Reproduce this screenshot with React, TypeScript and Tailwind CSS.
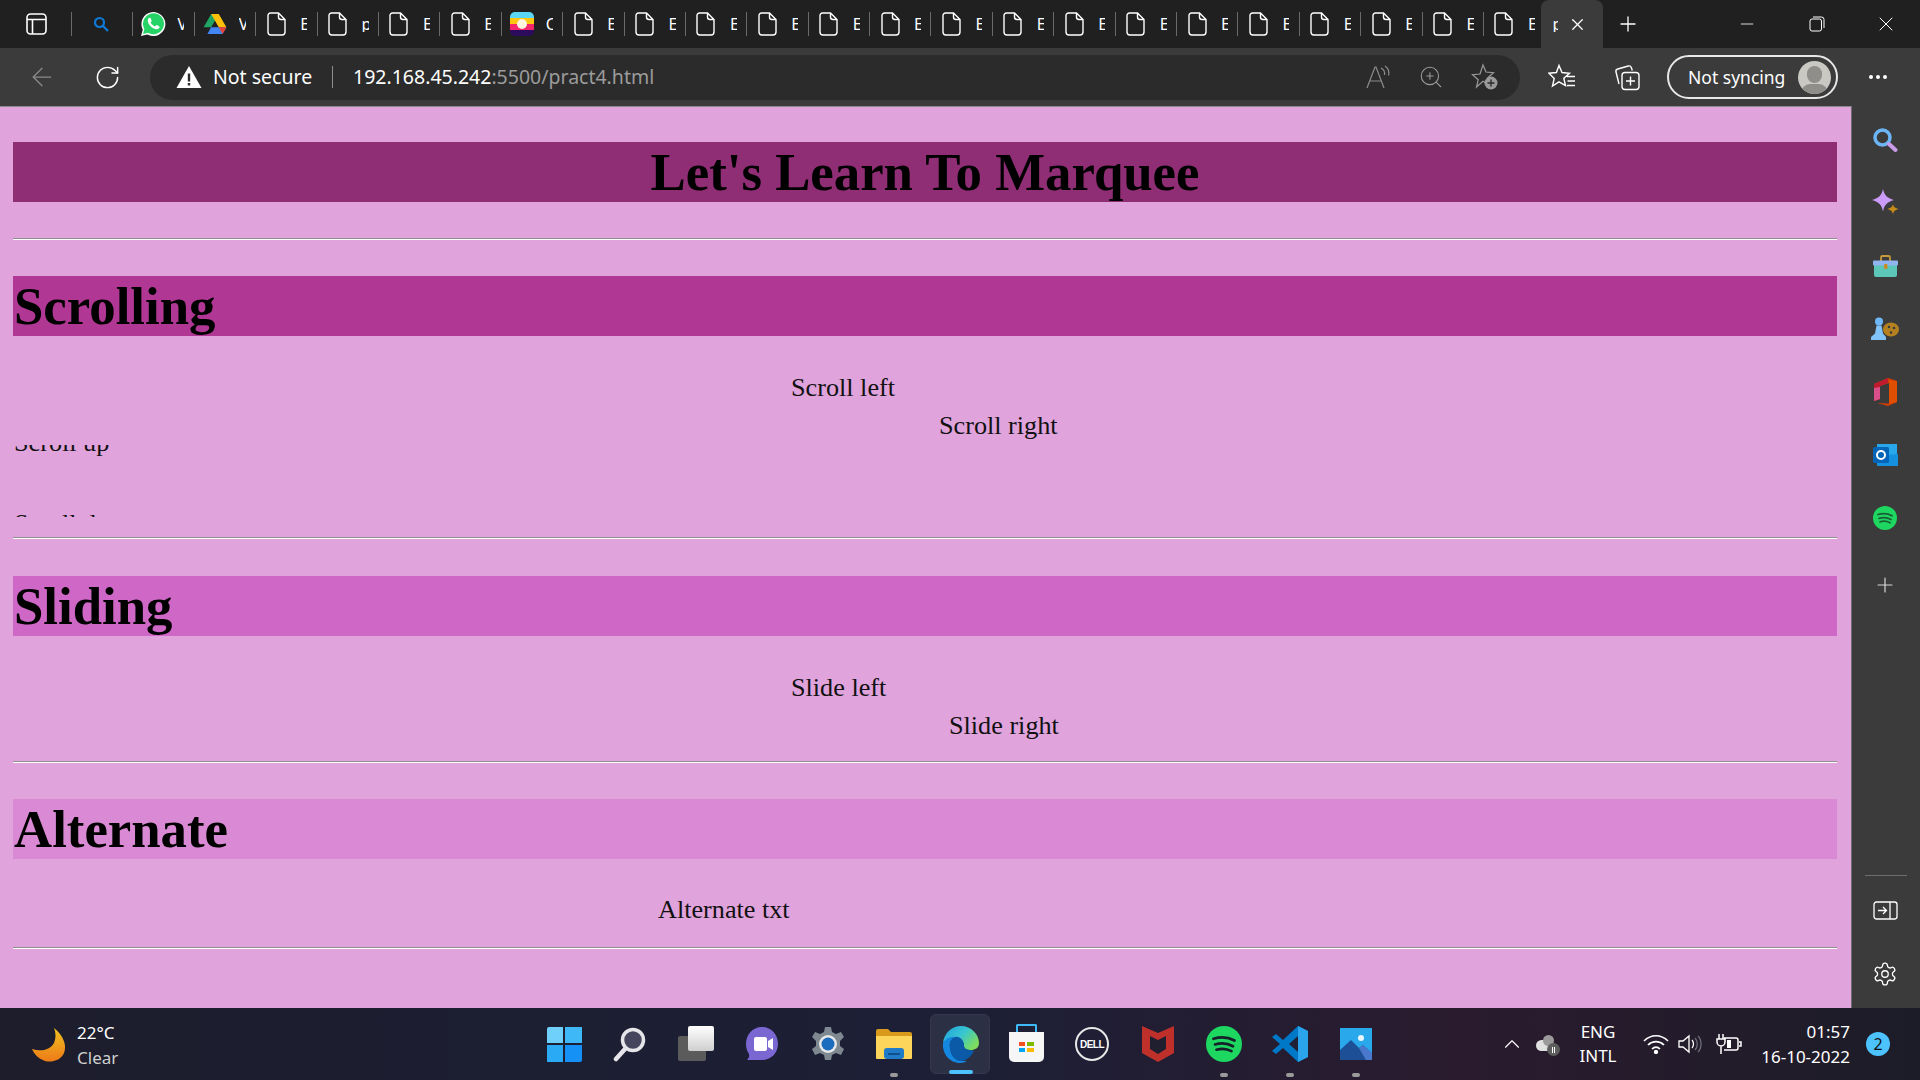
import React from "react";
import { ArrowLeft, RotateCw, X, Plus, Minus, ZoomIn, ChevronUp } from "lucide-react";

const ui = "font-['Noto_Sans','Open_Sans',sans-serif]";
const serif = "font-['Liberation_Serif','Times_New_Roman',serif]";

const FileIcon = () => (
  <svg width="19" height="24" viewBox="0 0 19 24" fill="none" stroke="#fff" strokeWidth="1.4" className="shrink-0">
    <path d="M3.5 1h8L18 7.5V20a3 3 0 0 1-3 3H4a3 3 0 0 1-3-3V3.5A2.5 2.5 0 0 1 3.5 1zM11.5 1v4a2.5 2.5 0 0 0 2.5 2.5h4" />
  </svg>
);
const Whatsapp = () => (
  <svg width="26" height="26" viewBox="0 0 26 26" className="shrink-0">
    <path d="M1 25l1.8-6.3A12 12 0 1 1 7.500 23.500z" fill="#fff" />
    <path d="M3 23l1.400-5A10.500 10.500 0 1 1 8 21.700z" fill="#25d366" />
    <path d="M9.500 6.800c-.6 0-1.700 1-1.700 2.800 0 4 4.500 8.600 8.800 8.600 1.800 0 3-1.300 3-2.300 0-.5-2.700-1.900-3.100-1.800-.5.100-1 1.400-1.500 1.300-1.600-.4-3.800-2.400-4.300-3.900-.1-.5 1-1.100 1-1.600 0-.4-1-3-1.500-3.100z" fill="#fff" />
  </svg>
);
const Drive = () => (
  <svg width="24" height="22" viewBox="0 0 24 22" className="shrink-0">
    <path d="M8.200 1h7.600l-7.700 13.300H.6z" fill="#1fa463" />
    <path d="M15.800 1l7.600 13.300h-7.700L8.200 1z" fill="#ffc107" />
    <path d="M23.400 14.300L19.600 21H4.400l3.700-6.700z" fill="#4285f4" />
    <path d="M23.400 14.300L19.600 21l-3.900-6.700z" fill="#ea4335" />
  </svg>
);
const Colourful = () => (
  <div className="relative w-6 h-6 shrink-0 rounded-[5px] overflow-hidden flex flex-col">
    <div className="h-[6px] bg-[#5ad7f5]" />
    <div className="h-[6px] bg-[#fec60f]" />
    <div className="h-[6px] bg-[#f5256b]" />
    <div className="h-[6px] bg-[#2c0a5c]" />
    <div className="absolute left-[7px] top-[7px] w-[10px] h-[10px] rounded-full bg-[#fff4dc]" />
  </div>
);

const Tab = ({ icon, letter, first }: { icon: React.ReactNode; letter?: string; first?: boolean }) => (
  <div className="w-[61.4px] h-[24px] shrink-0 border-l border-[#6a6a6a] flex items-center overflow-hidden">
    <div className={`w-[43px] shrink-0 flex justify-center ${first ? "pl-[14px]" : "pr-[7px] pl-[4px]"}`}>{icon}</div>
    {letter && (
      <span className={`${ui} text-[16px] text-white ml-[1px] w-[7px] overflow-hidden leading-none`}>{letter}</span>
    )}
  </div>
);

const tabs: { icon: React.ReactNode; letter?: string }[] = [
  { icon: <svg width="18" height="18" viewBox="0 0 18 18" fill="none" stroke="#0f7bd8" strokeWidth="2.200"><circle cx="7.500" cy="7.500" r="4.500" /><path d="M11 11l5 5" /></svg> },
  { icon: <Whatsapp />, letter: "V" },
  { icon: <Drive />, letter: "V" },
  { icon: <FileIcon />, letter: "E" },
  { icon: <FileIcon />, letter: "p" },
  { icon: <FileIcon />, letter: "E" },
  { icon: <FileIcon />, letter: "E" },
  { icon: <Colourful />, letter: "C" },
  ...Array.from({ length: 16 }, () => ({ icon: <FileIcon />, letter: "E" })),
];

const TabBar = () => (
  <div className="h-[48px] bg-[#202020] flex items-center shrink-0">
    <div className="w-[71px] shrink-0 flex pl-[26px]">
      <svg width="21" height="22" viewBox="0 0 21 22" fill="none" stroke="#fff" strokeWidth="1.600">
        <rect x="1" y="1" width="19" height="20" rx="3.500" />
        <path d="M1 6.500h19M6.500 6.500V21" />
      </svg>
    </div>
    {tabs.map((t, i) => <Tab key={i} icon={t.icon} letter={t.letter} first={i === 0} />)}
    <div className="w-[62px] h-[48px] shrink-0 bg-[#3b3b3b] rounded-t-lg flex items-center pl-[11px] ml-[-3px] gap-[10px]">
      <span className={`${ui} text-[16px] text-white w-[6px] overflow-hidden leading-none`}>p</span>
      <X size={19} strokeWidth={1.600} color="#fff" />
    </div>
    <div className="ml-[13px] w-[24px] flex justify-center"><Plus size={26} strokeWidth={1.300} color="#fff" /></div>
    <div className="ml-[95px] w-[24px] flex justify-center"><Minus size={20} strokeWidth={1} color="#fff" /></div>
    <div className="ml-[46px] w-[24px] flex justify-center">
      <svg width="16" height="16" viewBox="0 0 16 16" fill="none" stroke="#fff" strokeWidth="1"><rect x="1" y="3" width="11.500" height="12" rx="2" /><path d="M4 1h8.500A2.500 2.500 0 0 1 15 3.500V12" /></svg>
    </div>
    <div className="ml-[45px] w-[24px] flex justify-center"><X size={24} strokeWidth={1} color="#fff" /></div>
  </div>
);

const ToolBar = () => (
  <div className="h-[58px] bg-[#3b3b3b] flex items-center shrink-0">
    <div className="w-[150px] shrink-0 flex items-center pl-[27px]">
      <ArrowLeft size={30} strokeWidth={1} color="#8a8a8a" />
      <RotateCw size={27} strokeWidth={1.300} color="#fff" className="ml-[37px]" />
    </div>
    <div className="w-[1370px] h-[45px] bg-[#2b2b2b] rounded-full flex items-center shrink-0">
      <svg width="26" height="24" viewBox="0 0 26 24" className="ml-[26px] shrink-0">
        <path d="M13 1L25.500 23H.5z" fill="#fff" />
        <path d="M11.800 8.500h2.400v8h-2.400zM11.800 18h2.400v2.400h-2.400z" fill="#2b2b2b" />
      </svg>
      <span className={`${ui} text-[19.500px] text-white ml-[11px] w-[101px] whitespace-nowrap`}>Not secure</span>
      <div className="w-px h-[22px] bg-[#8c8c8c] ml-[18px]" />
      <span className={`${ui} text-[19.500px] ml-[20px] text-white whitespace-nowrap`}>192.168.45.242<span className="text-[#9b9b9b]">:5500/pract4.html</span></span>
      <div className="ml-auto flex items-center pr-[21px]">
        <svg width="26" height="24" viewBox="0 0 26 24" fill="none" stroke="#8c8c8c" strokeWidth="1.200">
          <path d="M1 23L9 2h1l8 21M4 16h11M15 3c3 1.500 4 4 3.500 7M19 1c3 2 4.500 5.500 3.500 9.500" />
        </svg>
        <ZoomIn size={26} strokeWidth={1} color="#9a9a9a" className="ml-[26px]" />
        <svg width="28" height="28" viewBox="0 0 28 28" className="ml-[27px]" fill="none">
          <path d="M12 2l3 7 7.500.7-5.700 5 1.700 7.300-6.500-3.800L5.500 24l1.700-7.300-5.700-5 7.500-.7z" stroke="#9a9a9a" strokeWidth="1.200" />
          <circle cx="20" cy="20" r="6.500" fill="#9a9a9a" />
          <path d="M20 16.500v7M16.500 20h7" stroke="#2b2b2b" strokeWidth="1.400" />
        </svg>
      </div>
    </div>
    <svg width="28" height="28" viewBox="0 0 28 28" fill="none" stroke="#fff" strokeWidth="1.400" className="ml-[28px] shrink-0">
      <path d="M11 2.500l3 7 7.500.7-5.700 5 1.700 7.300L11 18.800 4.500 23 6.200 15.500.9 10.200l7.500-.7zM19 13.500h8M19.500 18h7.500M19 22.500h8" />
    </svg>
    <svg width="28" height="28" viewBox="0 0 28 28" fill="none" stroke="#fff" strokeWidth="1.400" className="ml-[37px] shrink-0">
      <path d="M6 21L3 9a2.500 2.500 0 0 1 1.800-3l10.500-3a2.500 2.500 0 0 1 3 1.500l1 3" />
      <rect x="9" y="9.500" width="17" height="17" rx="3" />
      <path d="M17.500 13.500v9M13 18h9" />
    </svg>
    <div className="ml-[26px] w-[171px] h-[44px] shrink-0 border-2 border-[#e8e8e8] rounded-full flex items-center pl-[19px]">
      <span className={`${ui} text-[17.500px] text-white whitespace-nowrap`}>Not syncing</span>
      <div className="w-[33px] h-[33px] rounded-full ml-auto mr-[5px] bg-[#c9c8c3] overflow-hidden relative">
        <div className="absolute left-[9px] top-[5px] w-[15px] h-[17px] rounded-full bg-[#8f8e8a]" />
        <div className="absolute left-[3px] top-[23px] w-[27px] h-[18px] rounded-full bg-[#8f8e8a]" />
      </div>
    </div>
    <div className="ml-[31px] flex gap-[3px]">
      <span className="w-[4px] h-[4px] rounded-full bg-white" />
      <span className="w-[4px] h-[4px] rounded-full bg-white" />
      <span className="w-[4px] h-[4px] rounded-full bg-white" />
    </div>
  </div>
);

const Hr = ({ className }: { className: string }) => (
  <div className={`h-[2px] bg-white border-t border-[#8f8f8f] ${className}`} />
);

const H1 = ({ color, center, children }: { color: string; center?: boolean; children: React.ReactNode }) => (
  <div className={`h-[60px] ${color} text-[52.800px] font-bold leading-[60px] text-black ${center ? "text-center" : "pl-[1px]"}`}>{children}</div>
);

const Line = ({ x, children }: { x: string; children: string }) => (
  <div className={`h-[38px] leading-[38px] text-[26.200px] text-[#111] whitespace-nowrap ${x}`}>{children}</div>
);

const Page = () => (
  <main className={`${serif} w-[1851px] bg-[#e0a3dc] border-t border-[#8a8a8a] pl-[13px] pr-[14px] pt-[35px] overflow-hidden`}>
    <H1 color="bg-[#8f2d75]" center>Let's Learn To Marquee</H1>
    <Hr className="mt-[36px]" />
    <div className="mt-[36px]"><H1 color="bg-[#b03894]">Scrolling</H1></div>
    <div className="mt-[33px]">
      <Line x="ml-[778px]">Scroll left</Line>
      <Line x="ml-[926px]">Scroll right</Line>
    </div>
    <div className="h-[36px] overflow-hidden">
      <div className="h-[38px] leading-[38px] mt-[-21px] text-[26.200px] text-[#111] pl-[1px]">Scroll up</div>
    </div>
    <div className="h-[36px] overflow-hidden">
      <div className="h-[38px] leading-[38px] mt-[24px] text-[26.200px] text-[#111] pl-[1px] whitespace-nowrap">Scroll down</div>
    </div>
    <Hr className="mt-[20px]" />
    <div className="mt-[37px]"><H1 color="bg-[#ce67c6]">Sliding</H1></div>
    <div className="mt-[33px]">
      <Line x="ml-[778px]">Slide left</Line>
      <Line x="ml-[936px]">Slide right</Line>
    </div>
    <Hr className="mt-[16px]" />
    <div className="mt-[36px]"><H1 color="bg-[#da8ad5]">Alternate</H1></div>
    <div className="mt-[32px]">
      <Line x="ml-[645px]">Alternate txt</Line>
    </div>
    <Hr className="mt-[18px]" />
  </main>
);

const SideIcon = ({ children }: { children: React.ReactNode }) => (
  <div className="h-[63px] shrink-0 flex items-center justify-center pr-[2px]">{children}</div>
);

const Sidebar = () => (
  <aside className="w-[69px] bg-[#3b3b3b] border-l border-[#6e6e6e] flex flex-col items-stretch pt-[2px] pb-[3px] shrink-0">
    <SideIcon>
      <svg width="26" height="26" viewBox="0 0 26 26" fill="none"><circle cx="10.500" cy="10.500" r="7.500" stroke="#6cb6f7" strokeWidth="3.500" /><path d="M17 17l6.500 6" stroke="#c99be8" strokeWidth="4" strokeLinecap="round" /></svg>
    </SideIcon>
    <SideIcon>
      <svg width="27" height="27" viewBox="0 0 27 27"><path d="M11 0c1.500 6.500 4 9 11 11-7 2-9.500 4.500-11 11.500C9.500 15.500 7 13 0 11 7 9 9.500 6.500 11 0z" fill="#cb9bf8" /><path d="M21 15c.6 2.600 1.500 3.900 5.500 5-4 1.100-4.900 2.400-5.500 5.500-.6-3.100-1.500-4.400-5.500-5.500 4-1.100 4.900-2.400 5.500-5z" fill="#c58a17" /></svg>
    </SideIcon>
    <SideIcon>
      <svg width="27" height="24" viewBox="0 0 27 24" fill="none"><path d="M9 7V3.500A1.500 1.500 0 0 1 10.500 2h6A1.500 1.500 0 0 1 18 3.500V7" stroke="#c79a3b" strokeWidth="1.800" /><rect x="2" y="8" width="23" height="15" rx="2" fill="#5cc6b8" /><rect x="1" y="6.500" width="25" height="5" rx="1" fill="#8fb4f0" /><rect x="12" y="10" width="3.500" height="5" rx="1" fill="#c78a2b" /></svg>
    </SideIcon>
    <SideIcon>
      <svg width="28" height="24" viewBox="0 0 28 24"><ellipse cx="20" cy="12.500" rx="8" ry="7" fill="#b5801f" /><circle cx="18" cy="10" r="1.300" fill="#3b3b3b" /><circle cx="23" cy="11" r="1.300" fill="#3b3b3b" /><circle cx="20" cy="15.500" r="1.300" fill="#3b3b3b" /><circle cx="8" cy="4.500" r="4" fill="#6fb8f7" /><path d="M5.500 8.500h5l1.500 8 3 3.500v3H0v-3l4-3.500z" fill="#80c4fa" /></svg>
    </SideIcon>
    <SideIcon>
      <svg width="24" height="28" viewBox="0 0 24 28"><path d="M1 6L15 0l9 3v21l-9 4-11-3 12 .5V5L7 8v13l-6 2z" fill="#d83b01" /><path d="M1 6l14-6v5L7 8v13l-6 2z" fill="#c01a2f" /><path d="M1 10v13l6-2V9z" fill="#d94f8a" /><path d="M16 2l8 1v21l-8 2z" fill="#e04f00" /></svg>
    </SideIcon>
    <SideIcon>
      <svg width="25" height="24" viewBox="0 0 25 24"><path d="M4 1h20v22H4z" fill="#28a8ea" /><path d="M14 12l11-1v12H4v-2z" fill="#1490df" /><rect x="0" y="4" width="16" height="16" rx="1.500" fill="#0364b8" /><circle cx="8" cy="12" r="4" fill="none" stroke="#fff" strokeWidth="2" /></svg>
    </SideIcon>
    <SideIcon>
      <svg width="24" height="24" viewBox="0 0 24 24"><circle cx="12" cy="12" r="12" fill="#1ed760" /><path d="M5 8.500c5-1.500 10-1 14 1.200M6 12.300c4.500-1.200 8.500-.8 12 1.200M7 15.800c3.500-1 7-.7 10 1" fill="none" stroke="#1b5e35" strokeWidth="1.800" strokeLinecap="round" /></svg>
    </SideIcon>
    <div className="h-[71px] shrink-0 flex items-center justify-center pr-[2px]"><Plus size={24} strokeWidth={1.200} color="#d8d8d8" /></div>
    <div className="mt-auto w-[42px] ml-[13px] h-px bg-[#6e6e6e]" />
    <div className="h-[70px] flex items-center justify-center pr-[2px]">
      <svg width="25" height="20" viewBox="0 0 25 20" fill="none" stroke="#fff" strokeWidth="1.300"><rect x="1" y="1" width="23" height="17" rx="2.500" /><path d="M17 1v17M5 9.500h8M10 6l3.500 3.500L10 13" /></svg>
    </div>
    <div className="h-[59px] flex items-center justify-center pb-[3px] pr-[2px]">
      <svg width="26" height="26" viewBox="0 0 24 24" fill="none" stroke="#fff" strokeWidth="1.200"><circle cx="12" cy="12" r="3" /><path d="M12.220 2h-.44a2 2 0 0 0-2 2v.18a2 2 0 0 1-1 1.730l-.43.25a2 2 0 0 1-2 0l-.15-.08a2 2 0 0 0-2.730.73l-.22.38a2 2 0 0 0 .73 2.730l.15.1a2 2 0 0 1 1 1.720v.51a2 2 0 0 1-1 1.740l-.15.09a2 2 0 0 0-.73 2.730l.22.38a2 2 0 0 0 2.730.73l.15-.08a2 2 0 0 1 2 0l.43.25a2 2 0 0 1 1 1.730V20a2 2 0 0 0 2 2h.44a2 2 0 0 0 2-2v-.18a2 2 0 0 1 1-1.730l.43-.25a2 2 0 0 1 2 0l.15.08a2 2 0 0 0 2.730-.73l.22-.39a2 2 0 0 0-.73-2.730l-.15-.08a2 2 0 0 1-1-1.740v-.5a2 2 0 0 1 1-1.740l.15-.09a2 2 0 0 0 .73-2.730l-.22-.38a2 2 0 0 0-2.730-.73l-.15.08a2 2 0 0 1-2 0l-.43-.25a2 2 0 0 1-1-1.730V4a2 2 0 0 0-2-2z" /></svg>
    </div>
  </aside>
);

const TaskItem = ({ children, dot, active }: { children: React.ReactNode; dot?: boolean; active?: boolean }) => (
  <div className={`w-[60px] h-[60px] mr-[6px] shrink-0 rounded-md relative flex items-center justify-center ${active ? "bg-[#2c3045] border border-[#33384e]" : ""}`}>
    {children}
    {dot && <span className="absolute bottom-[-3px] left-[26px] w-[8px] h-[4px] rounded-full bg-[#9a9a9a]" />}
    {active && <span className="absolute bottom-[-1px] left-[18px] w-[24px] h-[4px] rounded-full bg-[#4cc2ff]" />}
  </div>
);

const Taskbar = () => (
  <footer className="h-[72px] shrink-0 flex items-center bg-[linear-gradient(90deg,#1d1d2c_0%,#1c1f36_50%,#2a1b2e_76%,#1c1c28_100%)]">
    <div className="w-[534px] shrink-0 flex items-center pl-[32px]">
      <svg width="36" height="36" viewBox="0 0 36 36" className="mt-[2px]"><defs><linearGradient id="moon" x1="0" y1="0" x2="0" y2="1"><stop offset="0" stopColor="#efc220" /><stop offset="1" stopColor="#ee7a18" /></linearGradient></defs><path d="M22 1c10 8 13 18 10 25-3 7-12 10-19 8C7 32 2 27 0 22c9 3 18 1 22-6 2-5 2-10 0-15z" fill="url(#moon)" /></svg>
      <div className={`${ui} ml-[9px] mt-[1px] text-[17px] leading-[25px]`}>
        <div className="text-white">22°C</div>
        <div className="text-[#cfcfcf]">Clear</div>
      </div>
    </div>
    <div className="flex items-center">
      <TaskItem>
        <div className="grid grid-cols-2 gap-[2px] w-[35px] h-[35px]">
          <span className="bg-[#6fd0fb] rounded-tl-[2px]" /><span className="bg-[#3fb8f8]" />
          <span className="bg-[#2aa9f5]" /><span className="bg-[#1590f5] rounded-br-[2px]" />
        </div>
      </TaskItem>
      <TaskItem>
        <svg width="34" height="36" viewBox="0 0 34 36" fill="none"><circle cx="20" cy="14" r="10.500" fill="#45465e" stroke="#e6e6ea" strokeWidth="3.500" /><path d="M12 23L3 33" stroke="#e6e6ea" strokeWidth="4.500" strokeLinecap="round" /></svg>
      </TaskItem>
      <TaskItem>
        <div className="relative w-[36px] h-[36px]">
          <div className="absolute left-0 top-[10px] w-[28px] h-[25px] bg-[#5b5b5b] rounded-[2px]" />
          <div className="absolute left-[10px] top-0 w-[26px] h-[25px] bg-[linear-gradient(180deg,#ffffff,#cfcfcf)] rounded-[2px]" />
        </div>
      </TaskItem>
      <TaskItem>
        <svg width="36" height="36" viewBox="0 0 36 36"><path d="M18 1c10 0 16 8 16 17s-7 16-16 16H3c2-2 2.500-4 2-6-2-3-3-6-3-10C2 9 8 1 18 1z" fill="#7b67d2" /><rect x="10" y="11" width="13" height="14" rx="2" fill="#fff" /><path d="M24 15l5-3v12l-5-3z" fill="#fff" /></svg>
      </TaskItem>
      <TaskItem>
        <svg width="36" height="36" viewBox="0 0 36 36"><path d="M15 1h6l1 5 4 2 5-2 3 5-4 4v5l4 3-3 6-5-2-4 2-1 5h-6l-1-5-4-2-5 2-3-6 4-3v-5L2 11l3-5 5 2 4-2z" fill="#7e8890" /><circle cx="18" cy="18" r="9" fill="#e8e8e8" /><circle cx="18" cy="18" r="6.500" fill="#1c6cc0" /></svg>
      </TaskItem>
      <TaskItem dot>
        <svg width="36" height="32" viewBox="0 0 36 32"><path d="M0 3a2 2 0 0 1 2-2h10l3 3h19a2 2 0 0 1 2 2v24H0z" fill="#d99a1c" /><path d="M0 8h36v22a1 1 0 0 1-1 1H1a1 1 0 0 1-1-1z" fill="#fdd55a" /><rect x="8" y="20" width="20" height="11" rx="3" fill="#1f7ac7" /><rect x="12" y="25" width="12" height="2" fill="#0f4f8c" /></svg>
      </TaskItem>
      <TaskItem active>
        <svg width="37" height="37" viewBox="0 0 37 37"><defs><linearGradient id="edge" x1="0" y1="0" x2="1" y2="0.600"><stop offset="0" stopColor="#1f9fe0" /><stop offset="0.550" stopColor="#38c6d0" /><stop offset="1" stopColor="#7ddc5e" /></linearGradient></defs><path d="M1 17C2 7 10 0 19 0c10 0 18 8 18 17 0 5-4 7-8 7-4 0-7-1-7-4 0-6-6-9-11-8-5 1-9 3-10 5z" fill="url(#edge)" /><path d="M1 17c3-5 8-7 12-6-4 2-6 6-5 11 1 7 8 14 17 13-2 1-4 2-7 2C8 37 0 28 1 17z" fill="#1488e0" /><path d="M13 11c4-1 8 2 9 7-1 3 2 6 6 6l4 1c-3 6-8 10-14 10-6-1-10-7-10-13-1-5 1-9 5-11z" fill="#0b5aa8" /></svg>
      </TaskItem>
      <TaskItem>
        <div className="relative w-[35px] h-[34px] mt-[2px]">
          <div className="absolute left-[7px] top-[-4px] w-[21px] h-[10px] border-2 border-[#3fb8f8] border-b-0 rounded-t-[2px]" />
          <div className="absolute inset-x-0 top-[4px] bottom-0 bg-[#f6f6f6] rounded-b-[5px] grid grid-cols-2 gap-[2px] p-[10px]">
            <span className="bg-[#f25022]" /><span className="bg-[#7fba00]" /><span className="bg-[#00a4ef]" /><span className="bg-[#ffb900]" />
          </div>
        </div>
      </TaskItem>
      <TaskItem>
        <div className="w-[34px] h-[34px] rounded-full border-2 border-[#e8e8e8] flex items-center justify-center">
          <span className="font-['Liberation_Sans',sans-serif] font-bold text-[10px] text-white tracking-[-0.5px]">DELL</span>
        </div>
      </TaskItem>
      <TaskItem>
        <svg width="32" height="36" viewBox="0 0 32 36"><path d="M0 0l16 7 16-7v27l-16 9-16-9z" fill="#c0302b" /><path d="M8 10l8 4 8-4v13l-8 5-8-5z" fill="#1f1f30" /></svg>
      </TaskItem>
      <TaskItem dot>
        <svg width="36" height="36" viewBox="0 0 24 24"><circle cx="12" cy="12" r="12" fill="#1ed760" /><path d="M5 8.500c5-1.500 10-1 14 1.200M6 12.300c4.500-1.200 8.500-.8 12 1.200M7 15.800c3.500-1 7-.7 10 1" fill="none" stroke="#16212a" strokeWidth="1.800" strokeLinecap="round" /></svg>
      </TaskItem>
      <TaskItem dot>
        <svg width="36" height="36" viewBox="0 0 36 36"><path d="M26 0l10 5v26l-10 5-15-14-7 6-4-3 8-7-8-7 4-3 7 6z" fill="#0078c8" /><path d="M26 0l10 5v26l-10 5z" fill="#2ba4ee" /><path d="M26 10l-9 8 9 8z" fill="#1f2033" /></svg>
      </TaskItem>
      <TaskItem dot>
        <svg width="32" height="32" viewBox="0 0 32 32"><rect width="32" height="32" fill="#2aa8ec" /><circle cx="21" cy="10" r="3" fill="#e8f6ff" /><path d="M0 32V22l11-10 8 8 4-3 9 8v7z" fill="#1c4f96" /><path d="M19 20l4-3 9 8v7h-6z" fill="#4a78cc" /></svg>
      </TaskItem>
    </div>
    <div className={`${ui} flex items-center text-white flex-1`}>
      <ChevronUp size={26} strokeWidth={1} color="#fff" className="ml-[107px]" />
      <div className="relative w-[24px] h-[18px] ml-[11px]">
        <div className="absolute left-0 top-[5px] w-[18px] h-[11px] rounded-full bg-[#e0e0e0]" />
        <div className="absolute left-[7px] top-0 w-[11px] h-[11px] rounded-full bg-[#9a9a9a]" />
        <div className="absolute right-0 bottom-[-3px] w-[13px] h-[13px] rounded-full bg-[#5d5d5d] flex items-center justify-center gap-[1px]">
          <span className="w-px h-[6px] bg-white" /><span className="w-px h-[6px] bg-white" />
        </div>
      </div>
      <div className="ml-[15px] text-[17px] leading-[24px] text-center w-[46px]"><div>ENG</div><div>INTL</div></div>
      <svg width="26" height="20" viewBox="0 0 26 20" fill="none" stroke="#fff" strokeWidth="1.700" className="ml-[22px]">
        <path d="M1 7c7-7 17-7 24 0M5 11c4.500-4.500 11.500-4.500 16 0M9 15c2.500-2.500 5.500-2.500 8 0" />
        <circle cx="13" cy="18" r="1.300" fill="#fff" />
      </svg>
      <svg width="26" height="22" viewBox="0 0 26 22" fill="none" stroke="#fff" strokeWidth="1.300" className="ml-[9px]">
        <path d="M1 8h4l6-5v16l-6-5H1zM14 7c2 2 2 6 0 8" />
        <path d="M17 5c3 3 3 9 0 12M20 3c4 4 4 12 0 16" stroke="#6e6e78" />
      </svg>
      <svg width="26" height="22" viewBox="0 0 26 22" fill="none" stroke="#fff" strokeWidth="1.500" className="ml-[12px]">
        <path d="M3 1v5M7 1v5M1 6h8v3a4 4 0 0 1-8 0zM5 13v8M8 5h12a2 2 0 0 1 2 2v8a2 2 0 0 1-2 2H8M23 9h2v4h-2" />
        <path d="M11 7h4v8h-4z" fill="#fff" stroke="none" />
      </svg>
      <div className="ml-auto text-[17px] leading-[25px] text-right mr-[16px]"><div>01:57</div><div>16-10-2022</div></div>
      <div className="w-[24px] h-[24px] rounded-full bg-[#4cc2ff] text-[#111] text-[16px] leading-[24px] text-center mr-[30px]">2</div>
    </div>
  </footer>
);

export default function App() {
  return (
    <div className="w-[1920px] h-[1080px] flex flex-col overflow-hidden bg-[#3b3b3b]">
      <TabBar />
      <ToolBar />
      <div className="flex flex-1 min-h-0">
        <Page />
        <Sidebar />
      </div>
      <Taskbar />
    </div>
  );
}
